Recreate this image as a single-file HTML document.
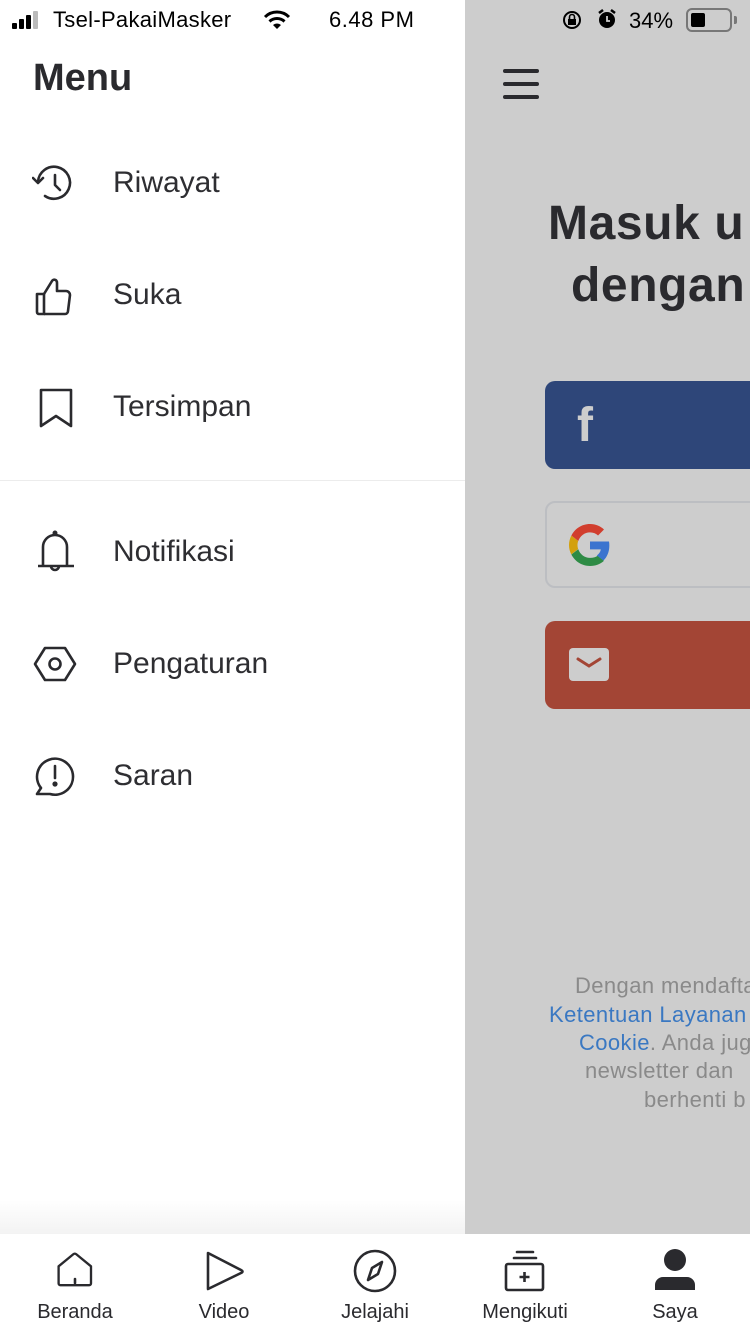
<!DOCTYPE html>
<html><head><meta charset="utf-8"><style>
*{margin:0;padding:0;box-sizing:border-box}
body{width:750px;height:1334px;overflow:hidden;position:relative;background:#fff;font-family:"Liberation Sans",sans-serif;color:#2a2a2e}
.abs{position:absolute}
.gray{left:465px;top:0;width:285px;height:1234px;background:#cdcdcd;overflow:hidden}
.item{position:absolute;left:113px;font-size:30px;color:#2e2e32}
.ic{position:absolute;left:32px}
.nav{top:1234px;left:0;width:750px;height:100px;background:#fff}
.nl{position:absolute;top:1301px;font-size:20px;color:#2a2a2e;transform:translateX(-50%)}
.foot{position:absolute;font-size:22px;color:#8a8a8a;white-space:nowrap;letter-spacing:0.4px}
.link{color:#3a78c2}
</style></head><body>
<div class="abs gray">
  <div class="abs" style="left:38px;top:69px;width:36px;height:4px;background:#2a2a2e;border-radius:2px"></div>
  <div class="abs" style="left:38px;top:82px;width:36px;height:4px;background:#2a2a2e;border-radius:2px"></div>
  <div class="abs" style="left:38px;top:95px;width:36px;height:4px;background:#2a2a2e;border-radius:2px"></div>
  <div class="abs" style="left:83px;top:196px;font-size:48px;font-weight:bold;color:#2a2a2e;white-space:nowrap;letter-spacing:0.6px">Masuk u</div>
  <div class="abs" style="left:106px;top:258px;font-size:48px;font-weight:bold;color:#2a2a2e;white-space:nowrap;letter-spacing:0.6px">dengan</div>
  <div class="abs" style="left:80px;top:381px;width:260px;height:88px;background:#2e4679;border-radius:10px"></div>
  <div class="abs" style="left:112px;top:398px;font-size:48px;font-weight:bold;color:#cdcdcd">f</div>
  <div class="abs" style="left:80px;top:501px;width:260px;height:87px;border:2px solid #bcbec2;border-radius:10px"></div>
  <svg class="abs" style="left:104px;top:524px" width="42" height="42" viewBox="0 0 48 48"><path fill="#d13e2e" d="M24 9.5c3.5 0 6.7 1.2 9.2 3.6l6.8-6.8C35.9 2.4 30.5 0 24 0 14.6 0 6.6 5.4 2.7 13.3l7.9 6.1C12.5 13.7 17.8 9.5 24 9.5z"/><path fill="#3b74cf" d="M46.1 24.5c0-1.6-.1-3.1-.4-4.5H24v9h12.4c-.5 2.9-2.200 5.3-4.6 7l7.4 5.8c4.3-4 6.9-9.9 6.9-17.3z"/><path fill="#d3a00c" d="M10.5 28.6c-.5-1.4-.8-3-.8-4.6s.3-3.2.8-4.6l-7.9-6.1C1 16.6 0 20.2 0 24s.9 7.4 2.6 10.7l7.9-6.1z"/><path fill="#2e8b45" d="M24 48c6.5 0 11.9-2.1 15.9-5.8l-7.4-5.8c-2.1 1.4-4.8 2.3-8.5 2.3-6.2 0-11.5-4.2-13.4-9.9l-7.9 6.1C6.6 42.6 14.6 48 24 48z"/></svg>
  <div class="abs" style="left:80px;top:621px;width:260px;height:88px;background:#a34535;border-radius:10px"></div>
  <div class="abs" style="left:104px;top:648px;width:40px;height:33px;background:#cdcdcd;border-radius:4px"></div>
  <svg class="abs" style="left:104px;top:648px" width="40" height="33"><path d="M9 11l11 7 11-7" stroke="#a34535" stroke-width="3" fill="none" stroke-linecap="round"/></svg>
  <div class="foot" style="left:110px;top:973px">Dengan mendaftar</div>
  <div class="foot link" style="left:84px;top:1002px">Ketentuan Layanan</div>
  <div class="foot" style="left:114px;top:1030px"><span class="link">Cookie</span>. Anda juga</div>
  <div class="foot" style="left:120px;top:1058px">newsletter dan</div>
  <div class="foot" style="left:179px;top:1087px">berhenti b</div>
  <div class="abs" style="left:0;top:0;width:285px;height:40px;font-size:22px;color:#000">
    <svg class="abs" style="left:96px;top:9px" width="22" height="22" viewBox="0 0 22 22"><circle cx="11" cy="11" r="8" fill="none" stroke="#000" stroke-width="2"/><rect x="7" y="10" width="8" height="6" fill="#000"/><path d="M8.5 10V8a2.5 2.5 0 015 0v2" fill="none" stroke="#000" stroke-width="1.6"/></svg>
    <svg class="abs" style="left:131px;top:8px" width="22" height="22" viewBox="0 0 22 22"><circle cx="11" cy="12" r="8" fill="#000"/><path d="M3 5l4-3M19 5l-4-3" stroke="#000" stroke-width="2.5"/><path d="M11 8v5h3" stroke="#cdcdcd" stroke-width="1.8" fill="none"/></svg>
    <div class="abs" style="left:164px;top:8px">34%</div>
    <div class="abs" style="left:221px;top:8px;width:46px;height:24px;border:2px solid #777;border-radius:6px"><div style="margin:3px;width:14px;height:14px;background:#000;border-radius:2px"></div></div>
    <div class="abs" style="left:269px;top:16px;width:3px;height:8px;background:#777;border-radius:0 2px 2px 0"></div>
  </div>
</div>
<div class="abs" style="left:12px;top:23px;width:5px;height:6px;background:#000;border-radius:1px"></div>
<div class="abs" style="left:19px;top:19px;width:5px;height:10px;background:#000;border-radius:1px"></div>
<div class="abs" style="left:26px;top:15px;width:5px;height:14px;background:#000;border-radius:1px"></div>
<div class="abs" style="left:33px;top:11px;width:5px;height:18px;background:#bbb;border-radius:1px"></div>
<div class="abs" style="left:53px;top:7px;font-size:22px;color:#000;letter-spacing:0.3px">Tsel-PakaiMasker</div>
<svg class="abs" style="left:263px;top:9px" width="28" height="22" viewBox="0 0 28 22"><path d="M2 8a17 17 0 0124 0" stroke="#000" stroke-width="3" fill="none"/><path d="M6.5 12.5a11 11 0 0115 0" stroke="#000" stroke-width="3" fill="none"/><path d="M14 20l-4-4a6 6 0 018 0z" fill="#000"/></svg>
<div class="abs" style="left:329px;top:7px;font-size:22px;color:#000;letter-spacing:0.5px">6.48 PM</div>
<div class="abs" style="left:33px;top:57px;font-size:38px;font-weight:bold;color:#2a2a2e">Menu</div>
<svg class="ic" style="top:163px" width="46" height="42" viewBox="0 0 46 42" fill="none" stroke="#2a2a2e" stroke-width="2.6" stroke-linecap="round" stroke-linejoin="round"><path d="M6 19A16 16 0 1 1 13 33"/><path d="M1 15l5 5 5-5"/><path d="M23 12v10l5 5"/></svg>
<div class="item" style="top:166px">Riwayat</div>
<svg class="ic" style="top:275px" width="46" height="42" viewBox="0 0 46 42" fill="none" stroke="#2a2a2e" stroke-width="2.6" stroke-linejoin="round"><path d="M5 19h7v20H7a2 2 0 01-2-2z"/><path d="M12 19l8-13c1-2 5-2 5 2v8h9a4 4 0 014 4l-2 16a3 3 0 01-3 3H12"/></svg>
<div class="item" style="top:278px">Suka</div>
<svg class="ic" style="top:387px" width="46" height="44" viewBox="0 0 46 44" fill="none" stroke="#2a2a2e" stroke-width="2.6" stroke-linejoin="round"><path d="M9 3h30v36l-15-10-15 10z"/></svg>
<div class="item" style="top:390px">Tersimpan</div>
<div class="abs" style="left:0;top:480px;width:465px;height:1px;background:#ececec"></div>
<svg class="ic" style="top:530px" width="46" height="46" viewBox="0 0 46 46" fill="none" stroke="#2a2a2e" stroke-width="2.6" stroke-linejoin="round"><path d="M6 36h36"/><path d="M11 36V17a12 12 0 0124 0v19"/><path d="M19 36a4 4 0 008 0"/><circle cx="23" cy="3" r="1.2" fill="#2a2a2e"/></svg>
<div class="item" style="top:535px">Notifikasi</div>
<svg class="ic" style="top:643px" width="46" height="42" viewBox="0 0 46 42" fill="none" stroke="#2a2a2e" stroke-width="2.6" stroke-linejoin="round"><path d="M3 21l10-16h20l10 16-10 16H13z"/><circle cx="23" cy="21" r="5.5"/></svg>
<div class="item" style="top:647px">Pengaturan</div>
<svg class="ic" style="top:755px" width="46" height="44" viewBox="0 0 46 44" fill="none" stroke="#2a2a2e" stroke-width="2.6" stroke-linejoin="round"><path d="M9 33A18 18 0 1 1 18 39H5z"/><path d="M23 11v12" stroke-linecap="round"/><circle cx="23" cy="29" r="1.3" fill="#2a2a2e"/></svg>
<div class="item" style="top:759px">Saran</div>
<div class="abs" style="left:0;top:1200px;width:465px;height:34px;background:linear-gradient(#fff,#f3f3f3)"></div>
<div class="abs nav"></div>
<svg class="abs" style="left:53px;top:1249px" width="44" height="44" viewBox="0 0 44 44" fill="none" stroke="#2a2a2e" stroke-width="2.6" stroke-linejoin="round"><path d="M4 17L20.5 3.5c.8-.7 2.2-.7 3 0L40 17v19a2 2 0 01-2 2H6a2 2 0 01-2-2z" transform="translate(2 2) scale(0.9)"/><path d="M22 30v4" stroke-linecap="round"/></svg>
<svg class="abs" style="left:202px;top:1249px" width="44" height="44" viewBox="0 0 44 44" fill="none" stroke="#2a2a2e" stroke-width="2.6" stroke-linejoin="round"><path d="M6 4l33 17c2 1 2 2 0 3L6 40z"/></svg>
<svg class="abs" style="left:352px;top:1249px" width="46" height="44" viewBox="0 0 46 44" fill="none" stroke="#2a2a2e" stroke-width="2.6" stroke-linejoin="round"><circle cx="23" cy="22" r="20"/><path d="M30 13l-4 12-10 6 4-12z"/></svg>
<svg class="abs" style="left:502px;top:1249px" width="46" height="44" viewBox="0 0 46 44" fill="none" stroke="#2a2a2e" stroke-width="2.6" stroke-linejoin="round"><path d="M15 3h16M12 9h22" stroke-linecap="round"/><rect x="4" y="15" width="37" height="26" rx="2"/><path d="M22.5 23v10M17.5 28h10"/></svg>
<svg class="abs" style="left:652px;top:1249px" width="46" height="44" viewBox="0 0 46 44" fill="#2a2a2e"><ellipse cx="23" cy="11" rx="11" ry="11"/><path d="M3 36a8 8 0 018-8h24a8 8 0 018 8v5H3z"/></svg>
<div class="nl" style="left:75px">Beranda</div>
<div class="nl" style="left:224px">Video</div>
<div class="nl" style="left:375px">Jelajahi</div>
<div class="nl" style="left:525px">Mengikuti</div>
<div class="nl" style="left:675px">Saya</div>
</body></html>
